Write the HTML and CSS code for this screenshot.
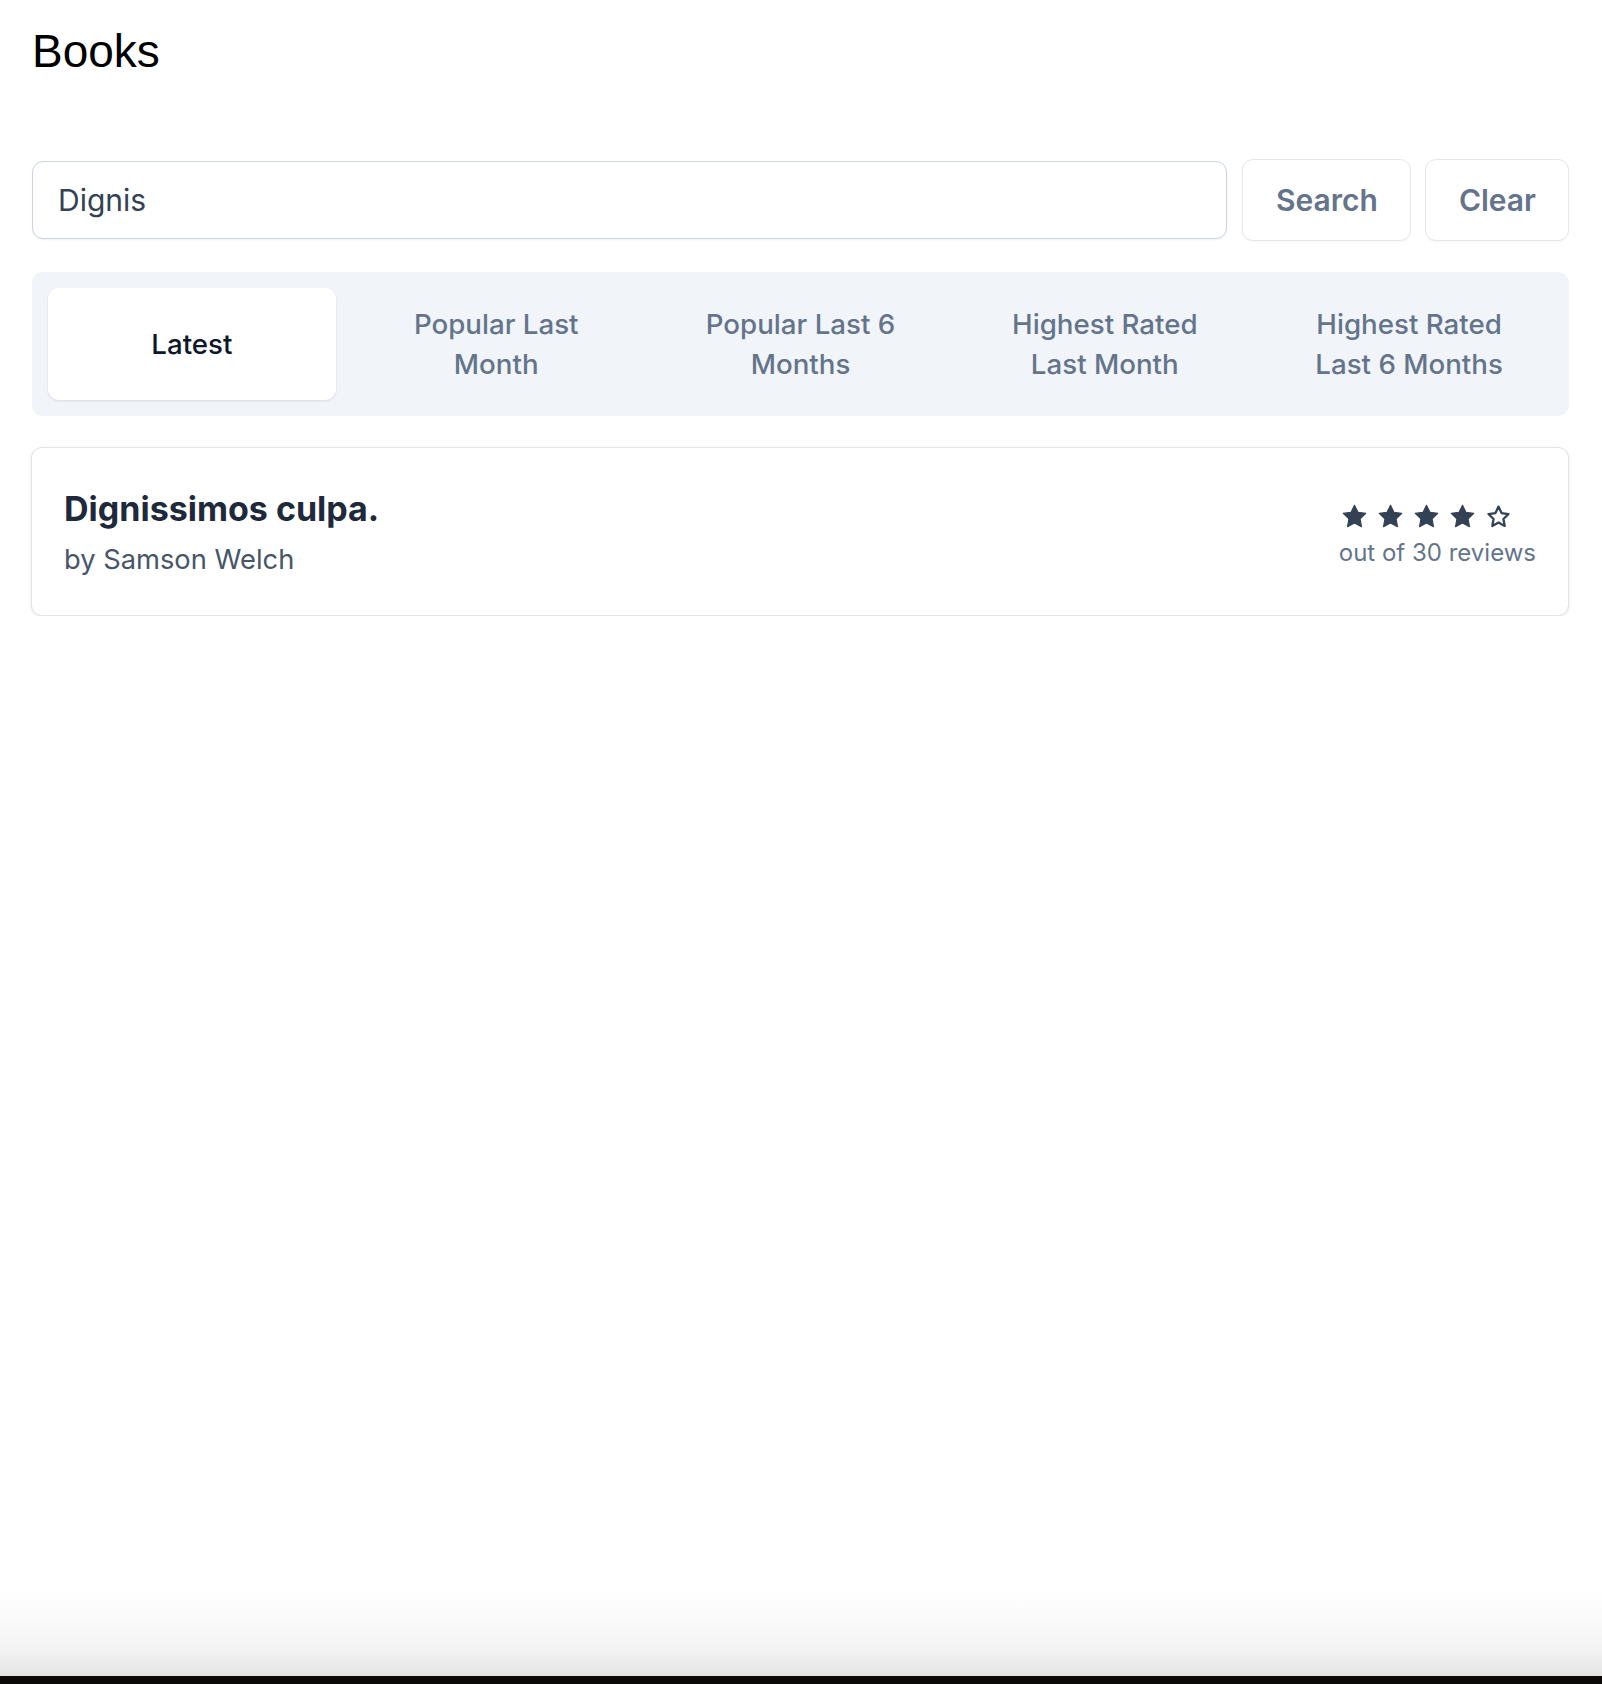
FILE: index.html
```html
<!DOCTYPE html>
<html lang="en">
<head>
<meta charset="utf-8">
<title>Books</title>
<link rel="stylesheet" href="styles.css">
</head>
<body>
<main class="page">
  <h1 class="page-title">Books</h1>
  <form class="search-row">
    <input class="search-input" type="text" name="title" value="Dignis">
    <button class="btn" type="submit">Search</button>
    <button class="btn" type="button">Clear</button>
  </form>
  <nav class="tabs">
    <a class="tab tab-active" href="#">Latest</a>
    <a class="tab" href="#">Popular Last Month</a>
    <a class="tab" href="#">Popular Last 6 Months</a>
    <a class="tab" href="#">Highest Rated Last Month</a>
    <a class="tab" href="#">Highest Rated Last 6 Months</a>
  </nav>
  <ul class="book-list">
    <li class="book-card">
      <div class="book-info">
        <a class="book-title" href="#">Dignissimos culpa.</a>
        <span class="book-author">by Samson Welch</span>
      </div>
      <div class="book-rating">
        <div class="stars">
          <svg class="star" viewBox="0 0 24 24"><polygon class="star-full" points="12,2 15.09,8.26 22,9.27 17,14.14 18.18,21.02 12,17.77 5.82,21.02 7,14.14 2,9.27 8.91,8.26"/></svg>
          <svg class="star" viewBox="0 0 24 24"><polygon class="star-full" points="12,2 15.09,8.26 22,9.27 17,14.14 18.18,21.02 12,17.77 5.82,21.02 7,14.14 2,9.27 8.91,8.26"/></svg>
          <svg class="star" viewBox="0 0 24 24"><polygon class="star-full" points="12,2 15.09,8.26 22,9.27 17,14.14 18.18,21.02 12,17.77 5.82,21.02 7,14.14 2,9.27 8.91,8.26"/></svg>
          <svg class="star" viewBox="0 0 24 24"><polygon class="star-full" points="12,2 15.09,8.26 22,9.27 17,14.14 18.18,21.02 12,17.77 5.82,21.02 7,14.14 2,9.27 8.91,8.26"/></svg>
          <svg class="star" viewBox="0 0 24 24"><polygon class="star-empty" points="12,3.2 14.7,8.9 20.9,9.8 16.4,14.2 17.5,20.4 12,17.4 6.5,20.4 7.6,14.2 3.1,9.8 9.3,8.9"/></svg>
        </div>
        <div class="review-count">out of 30 reviews</div>
      </div>
    </li>
  </ul>
</main>
</body>
</html>
```

FILE: styles.css
```css
html {
  height: 100%;
  background: linear-gradient(to bottom, #ffffff 0, #ffffff 1585px, #fbfbfb 1615px, #f3f3f3 1650px, #e4e4e4 1676px, #0c0a09 1676px, #0c0a09 1684px);
}

body {
  margin: 0;
  font-family: Inter, "Noto Sans", sans-serif;
  color: #1e293b;
}

.page {
  padding: 25px 33px 0 32px;
}

.page-title {
  margin: 0;
  font-family: "Liberation Sans", Arial, sans-serif;
  font-size: 46px;
  font-weight: 400;
  line-height: 52px;
  color: #000;
}

.search-row {
  display: flex;
  align-items: center;
  margin-top: 82px;
  height: 82px;
}

.search-input {
  flex: 1;
  height: 78px;
  box-sizing: border-box;
  padding: 0 25px;
  border: 1.5px solid #cbd5e1;
  border-radius: 11px;
  font-family: Inter, sans-serif;
  font-size: 30px;
  color: #334155;
  background: #fff;
  box-shadow: 0 1px 2px rgba(15, 23, 42, 0.05);
  outline: none;
}

.btn {
  height: 82px;
  box-sizing: border-box;
  margin-left: 15px;
  padding: 0 32px 0 33px;
  border: 1.5px solid #e5e7eb;
  border-radius: 11px;
  background: #fff;
  font-family: Inter, sans-serif;
  font-size: 30px;
  font-weight: 600;
  color: #64748b;
  box-shadow: 0 1px 2px rgba(15, 23, 42, 0.04);
}

.btn + .btn {
  margin-left: 14px;
}

.tabs {
  display: grid;
  grid-template-columns: repeat(5, 1fr);
  gap: 16.5px;
  margin-top: 31px;
  padding: 16px;
  background: #f1f5f9;
  border-radius: 11px;
}

.tab {
  display: flex;
  align-items: center;
  justify-content: center;
  height: 112px;
  box-sizing: border-box;
  padding: 0 40px;
  text-align: center;
  text-decoration: none;
  font-size: 27.7px;
  font-weight: 500;
  line-height: 40px;
  color: #64748b;
  border-radius: 11px;
}

.tab-active {
  background: #fff;
  color: #0f172a;
  box-shadow: 0 1px 3px rgba(15, 23, 42, 0.08), 0 1px 2px rgba(15, 23, 42, 0.04);
}

.book-list {
  list-style: none;
  margin: 31px 0 0;
  padding: 0;
}

.book-card {
  display: flex;
  justify-content: space-between;
  align-items: flex-start;
  box-sizing: border-box;
  height: 169px;
  margin-left: -1px;
  padding: 38px 33px 0 32px;
  background: #fff;
  border: 1.5px solid #e2e4e8;
  border-radius: 11px;
  box-shadow: 0 1px 3px rgba(15, 23, 42, 0.1);
}

.book-info {
  display: flex;
  flex-direction: column;
}

.book-title {
  font-size: 34px;
  font-weight: 700;
  line-height: 46px;
  color: #1e293b;
  text-decoration: none;
}

.book-author {
  margin-top: 10px;
  font-size: 27.3px;
  line-height: 36px;
  color: #475569;
}

.book-rating {
  margin-top: 17px;
  margin-right: -1px;
}

.stars {
  display: flex;
  gap: 9px;
  height: 26px;
  margin-left: 2px;
}

.star {
  width: 27px;
  height: 27px;
}

.star-full {
  fill: #334155;
  stroke: #334155;
  stroke-width: 1;
  stroke-linejoin: round;
}

.star-empty {
  fill: none;
  stroke: #334155;
  stroke-width: 2;
  stroke-linejoin: round;
}

.review-count {
  margin-top: 9px;
  font-size: 24px;
  line-height: 30px;
  color: #64748b;
}
```
